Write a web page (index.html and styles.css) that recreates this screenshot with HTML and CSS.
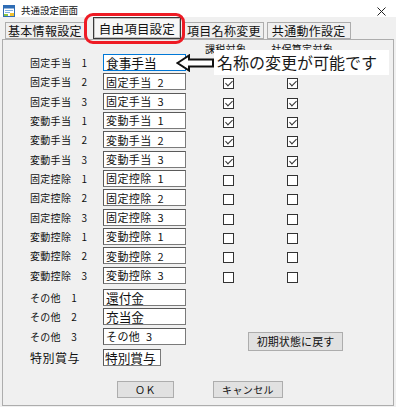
FILE: index.html
```html
<!DOCTYPE html>
<html lang="ja">
<head>
  <meta charset="UTF-8">
  <title>共通設定画面</title>
  <link rel="stylesheet" href="styles.css">
</head>
<body>
  <div class="window">
    <div class="titlebar">
      <svg class="app-icon" width="12" height="12" viewBox="0 0 12 12">
        <rect x="0.5" y="0.5" width="11" height="11" fill="#fff" stroke="#2f6db5"/>
        <rect x="0.5" y="0.5" width="11" height="3" fill="#2f6db5"/>
        <rect x="2" y="5" width="8" height="1" fill="#7fb0e0"/>
        <rect x="2" y="7" width="5" height="1" fill="#7fb0e0"/>
        <rect x="1" y="9" width="4" height="2" fill="#8cc63f"/>
        <rect x="7" y="8" width="4" height="3" fill="#f2c230"/>
      </svg>
      <span class="title">共通設定画面</span>
      <svg class="close" width="9" height="9" viewBox="0 0 9 9">
        <path d="M0.5 0.5 L8.5 8.5 M8.5 0.5 L0.5 8.5" stroke="#222" stroke-width="1"/>
      </svg>
    </div>

    <div class="tabs">
      <button class="tab">基本情報設定</button>
      <button class="tab active">自由項目設定</button>
      <button class="tab">項目名称変更</button>
      <button class="tab wide">共通動作設定</button>
    </div>

    <div class="panel">
      <div class="col-head">
        <span>課税対象</span>
        <span>社保算定対象</span>
      </div>

      <div class="items">
        <div class="row">
          <span class="label">固定手当　1</span>
          <input class="field typed focus" type="text" value="食事手当">
          <span class="check on"></span><span class="check on"></span>
        </div>
        <div class="row">
          <span class="label">固定手当　2</span>
          <input class="field" type="text" value="固定手当 2">
          <span class="check on"></span><span class="check on"></span>
        </div>
        <div class="row">
          <span class="label">固定手当　3</span>
          <input class="field" type="text" value="固定手当 3">
          <span class="check on"></span><span class="check on"></span>
        </div>
        <div class="row">
          <span class="label">変動手当　1</span>
          <input class="field" type="text" value="変動手当 1">
          <span class="check on"></span><span class="check on"></span>
        </div>
        <div class="row">
          <span class="label">変動手当　2</span>
          <input class="field" type="text" value="変動手当 2">
          <span class="check on"></span><span class="check on"></span>
        </div>
        <div class="row">
          <span class="label">変動手当　3</span>
          <input class="field" type="text" value="変動手当 3">
          <span class="check on"></span><span class="check on"></span>
        </div>
        <div class="row">
          <span class="label">固定控除　1</span>
          <input class="field" type="text" value="固定控除 1">
          <span class="check"></span><span class="check"></span>
        </div>
        <div class="row">
          <span class="label">固定控除　2</span>
          <input class="field" type="text" value="固定控除 2">
          <span class="check"></span><span class="check"></span>
        </div>
        <div class="row">
          <span class="label">固定控除　3</span>
          <input class="field" type="text" value="固定控除 3">
          <span class="check"></span><span class="check"></span>
        </div>
        <div class="row">
          <span class="label">変動控除　1</span>
          <input class="field" type="text" value="変動控除 1">
          <span class="check"></span><span class="check"></span>
        </div>
        <div class="row">
          <span class="label">変動控除　2</span>
          <input class="field" type="text" value="変動控除 2">
          <span class="check"></span><span class="check"></span>
        </div>
        <div class="row">
          <span class="label">変動控除　3</span>
          <input class="field" type="text" value="変動控除 3">
          <span class="check"></span><span class="check"></span>
        </div>
      </div>

      <div class="extra">
        <div class="extra-rows">
          <div class="row">
            <span class="label">その他　1</span>
            <input class="field typed" type="text" value="還付金">
          </div>
          <div class="row">
            <span class="label">その他　2</span>
            <input class="field typed" type="text" value="充当金">
          </div>
          <div class="row">
            <span class="label">その他　3</span>
            <input class="field" type="text" value="その他 3">
          </div>
          <div class="row bonus">
            <span class="label big">特別賞与</span>
            <input class="field typed short" type="text" value="特別賞与">
          </div>
        </div>
        <button class="btn reset">初期状態に戻す</button>
      </div>

      <div class="footer">
        <button class="btn ok">ＯＫ</button>
        <button class="btn cancel">キャンセル</button>
      </div>
    </div>

    <!-- annotations drawn over the dialog -->
    <div class="highlight"></div>
    <div class="callout">
      <svg class="callout-arrow" width="38" height="18" viewBox="0 0 38 18">
        <path d="M1.5 9 L13 1.5 L13 5.5 L37 5.5 L37 12.5 L13 12.5 L13 16.5 Z" fill="#fff" stroke="#111" stroke-width="2" stroke-linejoin="miter"/>
      </svg>
      <span class="callout-text">名称の変更が可能です</span>
    </div>
  </div>
</body>
</html>
```

FILE: styles.css
```css
body {
  margin: 0;
  background: #fff;
  font-family: "Noto Sans CJK JP", "Noto Sans", sans-serif;
  color: #111;
}

.window {
  position: relative;
  width: 396px;
  height: 407px;
  background: #f0f0f0;
  display: flex;
  flex-direction: column;
}

.titlebar {
  height: 17px;
  background: #fff;
  display: flex;
  align-items: flex-start;
  padding-left: 3px;
}

.app-icon {
  margin-top: 5px;
}

.title {
  margin-left: 6px;
  margin-top: 4px;
  font-size: 9.5px;
  line-height: 13px;
}

.close {
  margin-left: auto;
  margin-right: 10px;
  margin-top: 7px;
}

.tabs {
  height: 22px;
  display: flex;
  align-items: flex-end;
  gap: 3px;
  padding-left: 5px;
}

.tab {
  height: 17px;
  box-sizing: border-box;
  border: 1px solid #adadad;
  background: #efefef;
  font-family: inherit;
  font-size: 12px;
  letter-spacing: 0.3px;
  line-height: 14px;
  padding: 0 2px;
  color: #111;
}

.tab.wide {
  padding: 0 4px;
}

.tab.active {
  height: 22px;
  margin-left: 5px;
  padding: 0 5px;
  border-color: #3a3a3a;
  box-shadow: inset 0 0 0 1px #c4c4c4;
  background: #f7f7f7;
  font-size: 12.5px;
  letter-spacing: 0.2px;
  line-height: 19px;
}

.panel {
  flex: 1;
  margin: 0 2px 1px 2px;
  border: 1px solid #adadad;
}

.col-head {
  height: 14px;
  box-sizing: border-box;
  padding: 3px 0 0 202px;
  display: flex;
  font-size: 10px;
  letter-spacing: 0.3px;
  line-height: 12px;
}

.col-head span + span {
  margin-left: 25px;
}

.row {
  display: flex;
  align-items: flex-start;
  height: 19.333px;
}

.label {
  width: 73px;
  margin-left: 27px;
  font-size: 10px;
  letter-spacing: 0.3px;
  line-height: 17px;
  white-space: pre;
}

.label.big {
  font-size: 12px;
  letter-spacing: 0.5px;
}

.field {
  width: 83px;
  height: 17px;
  box-sizing: border-box;
  margin: 0;
  padding: 0 2px;
  border: 1px solid #7a7a7a;
  border-top-color: #5a5a5a;
  border-left-color: #5a5a5a;
  background: #fff;
  font-family: inherit;
  font-size: 11px;
  letter-spacing: 0.4px;
  word-spacing: 3px;
  color: #111;
  outline: none;
}

.field.typed {
  font-size: 12.7px;
  letter-spacing: 0;
}

.field.focus {
  border-color: #0078d7;
}

.field.short {
  width: 58px;
  padding: 0 1px;
}

.check {
  position: relative;
  width: 11px;
  height: 11px;
  box-sizing: border-box;
  margin-top: 5px;
  margin-left: 53px;
  border: 1px solid #333;
  background: #fff;
}

.field + .check {
  margin-left: 37px;
}

.check.on::after {
  content: "";
  position: absolute;
  left: 3px;
  top: 0;
  width: 3px;
  height: 6px;
  border: solid #333;
  border-width: 0 1px 1px 0;
  transform: rotate(45deg);
}

.extra {
  display: flex;
  margin-top: 3px;
}

.row.bonus {
  margin-top: 2px;
  height: 17px;
}

.btn {
  height: 17px;
  box-sizing: border-box;
  padding: 0;
  border: 1px solid #adadad;
  background: #e1e1e1;
  font-family: inherit;
  font-size: 10px;
  letter-spacing: 0.4px;
  color: #111;
}

.reset {
  width: 95px;
  height: 19px;
  margin-left: 62px;
  margin-top: 43px;
  font-size: 11px;
  letter-spacing: 0.1px;
}

.footer {
  display: flex;
  gap: 39px;
  padding-left: 114px;
  margin-top: 15px;
}

.ok {
  width: 57px;
}

.cancel {
  width: 70px;
}

.highlight {
  position: absolute;
  left: 84px;
  top: 13px;
  width: 101px;
  height: 31px;
  box-sizing: border-box;
  border: 3px solid #ee1b24;
  border-radius: 9px;
}

.callout {
  position: absolute;
  left: 176px;
  top: 50px;
  display: flex;
  align-items: center;
}

.callout-arrow {
  margin-top: 1px;
}

.callout-text {
  width: 175px;
  height: 25px;
  box-sizing: border-box;
  padding-left: 3px;
  background: #fff;
  font-size: 16px;
  line-height: 25px;
  color: #1a1a1a;
}
```
